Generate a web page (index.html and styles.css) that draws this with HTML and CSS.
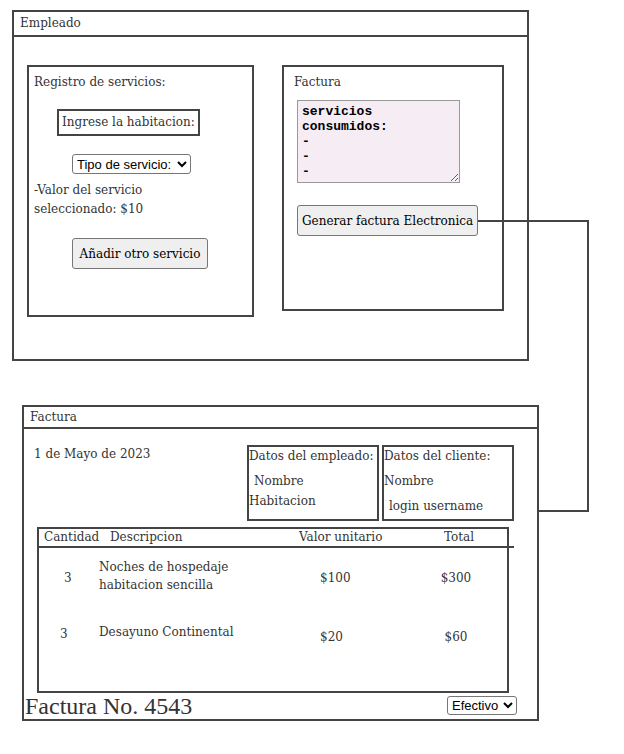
FILE: index.html
```html
<!DOCTYPE html>
<html lang="es">
<head>
  <meta charset="UTF-8" />
  <meta name="viewport" content="width=device-width, initial-scale=1.0" />
  <title>Empleado - Factura</title>
  <link rel="stylesheet" href="styles.css">
</head>
<body>
  <div class="page">
    <div class="panel empleado">
      <div class="panel-title">Empleado</div>
      <div class="panel-body">
        <div class="card registro">
          <p class="card-title">Registro de servicios:</p>
          <div class="habitacion">Ingrese la habitacion:</div>
          <select class="tipo">
            <option>Tipo de servicio:</option>
          </select>
          <p class="valor">-Valor del servicio<br>seleccionado: $10</p>
          <button class="btn add-btn">Añadir otro servicio</button>
        </div>

        <div class="card factura-form">
          <p class="card-title">Factura</p>
          <textarea class="consumidos">servicios consumidos:
-
-
-</textarea>
          <button class="btn gen-btn">Generar factura Electronica</button>
        </div>
      </div>
    </div>

    <div class="panel factura">
      <div class="panel-title">Factura</div>
      <div class="factura-top">
        <div class="fecha">1 de Mayo de 2023</div>
        <div class="datos">
          <p class="datos-title">Datos del empleado:</p>
          <p class="datos-line first indent">Nombre</p>
          <p class="datos-line">Habitacion</p>
        </div>
        <div class="datos">
          <p class="datos-title">Datos del cliente:</p>
          <p class="datos-line first">Nombre</p>
          <p class="datos-line indent low">login username</p>
        </div>
      </div>

      <div class="tabla">
        <div class="tabla-head">
          <span>Cantidad</span>
          <span>Descripcion</span>
          <span>Valor unitario</span>
          <span>Total</span>
        </div>
        <div class="fila fila-1">
          <span class="cant">3</span>
          <span class="desc">Noches de hospedaje<br>habitacion sencilla</span>
          <span class="precio">$100</span>
          <span class="total">$300</span>
        </div>
        <div class="fila fila-2">
          <span class="cant">3</span>
          <span class="desc">Desayuno Continental</span>
          <span class="precio">$20</span>
          <span class="total">$60</span>
        </div>
      </div>

      <div class="factura-foot">
        <span class="numero">Factura No. 4543</span>
        <select class="pago">
          <option>Efectivo</option>
        </select>
      </div>
    </div>

    <!-- conector entre el boton y la factura -->
    <svg class="connector" width="624" height="754" viewBox="0 0 624 754">
      <path d="M478 221 H588 V511 H539" fill="none" stroke="#444" stroke-width="2" />
    </svg>
  </div>
</body>
</html>
```

FILE: styles.css
```css
body {
  margin: 0;
  font-family: "DejaVu Serif", "Liberation Serif", serif;
  font-size: 12px;
  color: #333;
  background: #fff;
}

p {
  margin: 0;
}

.page {
  position: relative;
  width: 624px;
  height: 754px;
  padding-top: 10px;
  box-sizing: border-box;
}

.panel {
  border: 2px solid #444;
  box-sizing: border-box;
}

.panel-title {
  border-bottom: 2px solid #444;
  padding: 2px 6px 3px;
  line-height: 18px;
}

/* Empleado */
.empleado {
  margin-left: 12px;
  width: 517px;
  height: 351px;
}

.panel-body {
  display: flex;
  gap: 28px;
  padding: 28px 0 0 13px;
}

.card {
  border: 2px solid #444;
  box-sizing: border-box;
}

.registro {
  width: 227px;
  height: 252px;
  padding: 6px 5px;
}

.card-title {
  line-height: 18px;
}

.habitacion {
  display: inline-block;
  margin: 18px 0 0 23px;
  border: 2px solid #444;
  padding: 3px 3px;
  line-height: 17px;
  white-space: nowrap;
}

.tipo {
  display: block;
  margin: 18px 0 0 38px;
  font-family: "Liberation Sans", Arial, sans-serif;
  font-size: 13px;
  color: #000;
  height: 20px;
  width: 119px;
  border: 1px solid #767676;
  border-radius: 3px;
  background: #fff;
}

.valor {
  margin-top: 7px;
  line-height: 19px;
}

.btn {
  font-family: "DejaVu Serif", "Liberation Serif", serif;
  font-size: 12px;
  color: #000;
  background: #efefef;
  border: 1px solid #767676;
  border-radius: 3px;
  padding: 0 4px;
  white-space: nowrap;
}

.add-btn {
  display: block;
  margin: 19px 0 0 38px;
  width: 136px;
  height: 31px;
}

.factura-form {
  width: 222px;
  height: 246px;
  padding: 6px 13px;
}

.factura-form .card-title {
  margin-left: -3px;
}

.consumidos {
  display: block;
  margin-top: 9px;
  width: 163px;
  height: 83px;
  box-sizing: border-box;
  background: #f6edf4;
  border: 1px solid #999;
  font-family: "Liberation Mono", "Courier New", monospace;
  font-size: 13px;
  font-weight: bold;
  line-height: 15px;
  padding: 3px 4px;
  color: #000;
  resize: both;
}

.gen-btn {
  display: block;
  margin-top: 22px;
  width: 181px;
  height: 31px;
}

/* Factura */
.factura {
  margin: 44px 0 0 22px;
  width: 517px;
  height: 316px;
}

.factura .panel-title {
  padding: 1px 6px 1px;
}

.factura-top {
  display: flex;
  padding: 16px 0 0 10px;
}

.fecha {
  width: 213px;
  line-height: 18px;
}

.datos {
  width: 132px;
  height: 76px;
  box-sizing: border-box;
  border: 2px solid #444;
  margin-right: 3px;
  white-space: nowrap;
}

.datos-title {
  line-height: 18px;
}

.datos-line {
  line-height: 20px;
}

.datos-line.first {
  margin-top: 6px;
}

.indent {
  padding-left: 5px;
}

.low {
  margin-top: 5px;
}

.tabla {
  margin: 6px 0 0 13px;
  width: 472px;
  height: 166px;
  box-sizing: border-box;
  border: 2px solid #444;
}

.tabla-head {
  display: grid;
  grid-template-columns: 66px 189px 145px 1fr;
  width: 475px;
  box-sizing: border-box;
  padding-left: 5px;
  border-bottom: 2px solid #444;
  line-height: 17px;
  height: 19px;
  white-space: nowrap;
}

.fila {
  display: grid;
  grid-template-columns: 60px 221px 120px 1fr;
  align-items: center;
  line-height: 18px;
}

.fila-1 {
  height: 59px;
}

.fila-1 .desc {
  margin-bottom: 3px;
}

.fila-2 {
  height: 60px;
}

.fila-2 .desc {
  margin-bottom: 10px;
}

.fila-2 .cant {
  margin-bottom: 6px;
  padding-left: 21px;
}

.cant {
  padding-left: 25px;
}

.total {
  width: 32px;
  text-align: center;
}

.factura-foot {
  display: flex;
  align-items: center;
  justify-content: space-between;
  padding: 0 20px 0 1px;
  height: 24px;
}

.numero {
  font-family: "Liberation Serif", serif;
  font-size: 24px;
  line-height: 24px;
  margin-top: 1px;
}

.pago {
  font-family: "Liberation Sans", Arial, sans-serif;
  font-size: 13px;
  color: #000;
  height: 19px;
  width: 70px;
  border: 1px solid #767676;
  border-radius: 3px;
  background: #fff;
}

.connector {
  position: absolute;
  top: 0;
  left: 0;
  pointer-events: none;
}
```
